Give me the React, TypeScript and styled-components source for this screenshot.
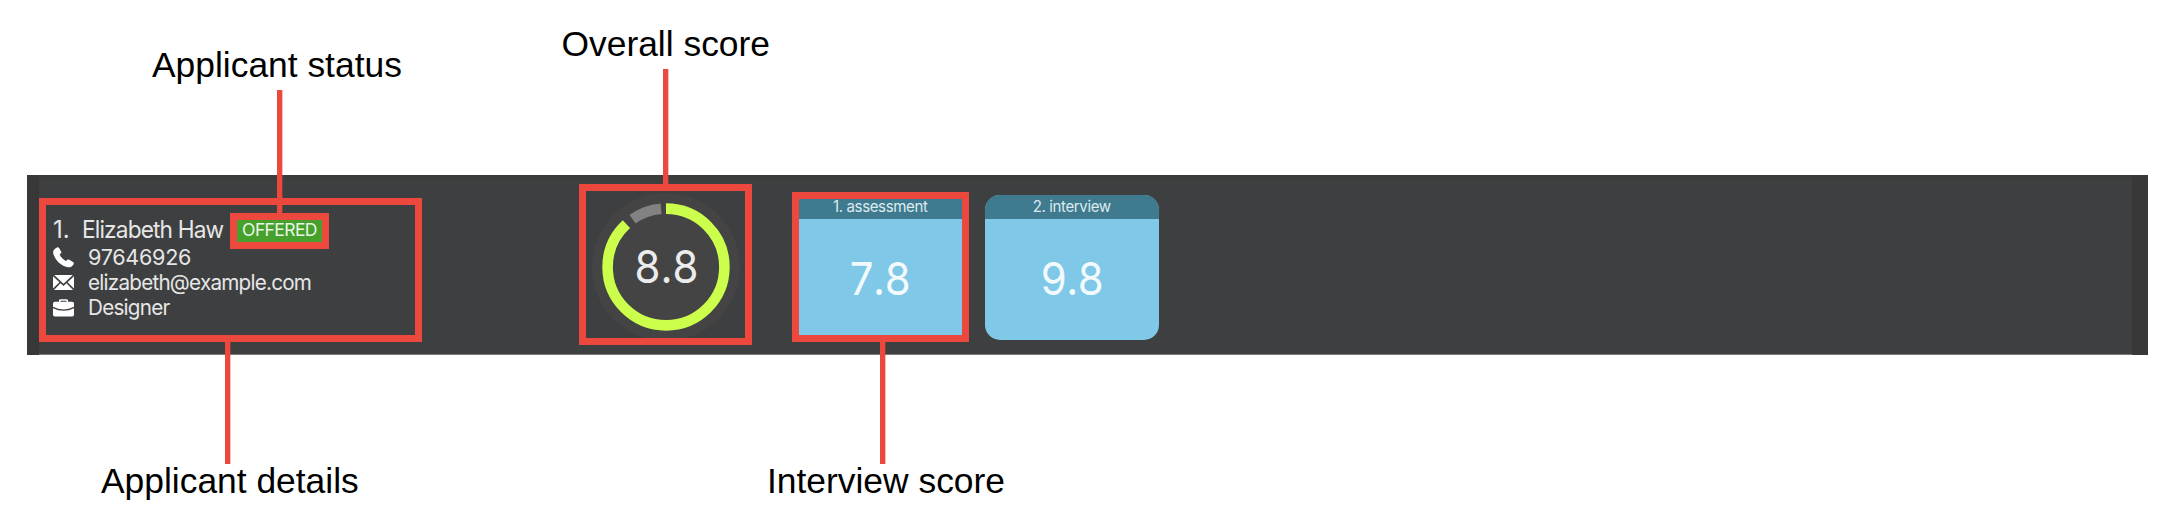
import React from "react";
import styled, { createGlobalStyle } from "styled-components";

const RED = "#ec483d";

const GlobalStyle = createGlobalStyle`
  * { box-sizing: border-box; }
  body { margin: 0; background: #fff; overflow: hidden; }
`;

const Page = styled.main`
  width: 2168px;
  height: 532px;
  display: grid;
  grid-template-rows: 175px 180px 177px;
  background: #fff;
`;

const NoteRow = styled.div<{ $offset: number }>`
  display: flex;
  align-items: flex-start;
  padding-left: ${(p) => p.$offset}px;
`;

const Note = styled.span<{ $top: number; $width: number }>`
  width: ${(p) => p.$width}px;
  margin-top: ${(p) => p.$top}px;
  font: 35.4px/40px "Liberation Sans", Arial, sans-serif;
  color: #000;
  white-space: nowrap;
`;

const Panel = styled.section`
  margin: 0 20px 0 27px;
  display: flex;
  align-items: flex-start;
  border-style: solid;
  border-color: #383838;
  border-width: 0 16px 0 12px;
  background: linear-gradient(#383b38 0, #3d3f40 5px);
  box-shadow: inset 0 -1px #77797a;
  font-family: Inter, "Liberation Sans", sans-serif;
  color: #e6e6e6;
`;

const Region = styled.div<{ $w: number; $h: number; $top: number; $left?: number }>`
  position: relative;
  flex: none;
  width: ${(p) => p.$w}px;
  height: ${(p) => p.$h}px;
  margin: ${(p) => p.$top}px 0 0 ${(p) => p.$left ?? 0}px;
`;

const Highlight = styled.i`
  position: absolute;
  inset: 0;
  border: 7px solid ${RED};
`;

const Leader = styled.i<{ $x: number; $length: number; $up?: boolean }>`
  position: absolute;
  left: ${(p) => p.$x}px;
  ${(p) => (p.$up ? "bottom: calc(100% - 3px);" : "top: calc(100% - 3px);")}
  width: 5px;
  height: ${(p) => p.$length + 3}px;
  background: ${RED};
  box-shadow: 1px 0 rgba(236, 72, 61, 0.35);
`;

const Details = styled.div`
  display: flex;
  flex-direction: column;
  padding: 15px 0 0 14px;
`;

const NameLine = styled.div`
  display: flex;
  height: 32px;
`;

const Index = styled.span`
  width: 29px;
  font-size: 24px;
  line-height: 34px;
`;

const Name = styled.span`
  width: 148px;
  font-size: 24px;
  line-height: 34px;
  letter-spacing: -0.9px;
  white-space: nowrap;
  transform: scaleX(0.945);
  transform-origin: left;
`;

const Status = styled(Region)`
  display: flex;
  justify-content: center;
  align-items: center;
  padding-bottom: 3px;
  background: #46a02c;
  font-size: 17.5px;
  letter-spacing: -0.6px;
  color: #eaf5e6;
`;

const ContactLine = styled.div`
  display: flex;
  align-items: center;
  height: 25.2px;
  gap: 14px;
  svg { flex: none; }
`;

const ContactText = styled.span<{ $spacing: number; $stretch?: number }>`
  font-size: 21.6px;
  line-height: 25px;
  letter-spacing: ${(p) => p.$spacing}px;
  white-space: nowrap;
  transform: scaleX(${(p) => p.$stretch ?? 1});
  transform-origin: left;
`;

const Gauge = styled.svg`
  display: block;
`;

const GaugeValue = styled.text`
  font-size: 45.5px;
  font-kerning: none;
  fill: #ececec;
`;

const Card = styled.article<{ $radius: number }>`
  width: 174px;
  height: 145px;
  border-radius: ${(p) => p.$radius}px;
  overflow: hidden;
  background: #7fc8e8;
`;

const CardTitle = styled.h3`
  margin: 0;
  height: 24px;
  background: #3f7a8e;
  color: #dcebf0;
  font-size: 15.7px;
  font-weight: 400;
  line-height: 24px;
  text-align: center;
  letter-spacing: -0.4px;
  span { display: inline-block; transform: scaleX(0.96); }
`;

const CardScore = styled.div`
  padding-top: 32px;
  font-size: 45.5px;
  line-height: 56px;
  text-align: center;
  letter-spacing: -0.5px;
  font-kerning: none;
  color: #f3fafd;
  transform: scaleX(0.92);
`;

const MarkedCard = styled(Region)`
  padding: 3px 0 0 1px;
`;

const PhoneIcon = () => (
  <svg width="21" height="21" viewBox="0 0 21 21" fill="#fff">
    <path d="M3.600.7C4.600 0 5.500.2 6.100 1.100L8.100 4.400C8.600 5.200 8.400 6 7.700 6.600L6.600 7.500C7.800 10.200 10.300 12.700 13 13.900L14.200 12.900C14.900 12.400 15.600 12.300 16.300 12.700L20 14.900C20.900 15.400 21.100 16.300 20.600 17.200 19.300 19.400 17.600 20.600 15.300 20.300 7.800 19.200.9 12.200.1 5.200-.1 3.300 1.900 1.700 3.600.7z" />
  </svg>
);

const MailIcon = () => (
  <svg width="21" height="15" viewBox="0 0 21 15" fill="#fff">
    <path d="M1.200 0H19.800L10.500 8.700zM0 1.200 6.400 7.200 0 13.600zM21 1.200V13.600L14.600 7.200zM7.500 8.200 10.500 11 13.500 8.200 20 15H1z" />
  </svg>
);

const BriefcaseIcon = () => (
  <svg width="21" height="18" viewBox="0 0 21 18" fill="#fff">
    <path fillRule="evenodd" d="M6 2.700V1.500Q6 .2 7.300.2h6.400Q15 .2 15 1.500v1.200h4.200Q21 2.700 21 4.500v3.200Q16 10.300 10.500 10.400 5 10.300 0 7.700V4.500Q0 2.700 1.800 2.700zM7.500 1.700v1h6v-1z" />
    <path d="M0 9.200Q5 11.700 10.500 11.800 16 11.700 21 9.200v6.500Q21 17.500 19.200 17.500H1.800Q0 17.500 0 15.700z" />
  </svg>
);

const C = 2 * Math.PI * 58.4;

const ScoreGauge = ({ value }: { value: number }) => (
  <Gauge width="173" height="160" viewBox="0 0 173 160">
    <circle cx="87" cy="83" r="74" fill="#444" />
    <g fill="none" strokeWidth="10.6" transform="rotate(-90 87 83)">
      <circle cx="87" cy="83" r="58.4" stroke="#cbff4c" strokeDasharray={`${(C * value) / 10} ${C}`} />
      <circle cx="87" cy="83" r="58.4" stroke="#828282" strokeDasharray={`${(C * 30) / 360} ${C}`} strokeDashoffset={(-C * 324.5) / 360} />
    </g>
    <GaugeValue x="87.5" y="99" textAnchor="middle" textLength="64" lengthAdjust="spacingAndGlyphs">
      {value}
    </GaugeValue>
  </Gauge>
);

export default function App() {
  return (
    <Page>
      <GlobalStyle />
      <NoteRow $offset={152}>
        <Note $top={45} $width={409.5}>Applicant status</Note>
        <Note $top={24} $width={220}>Overall score</Note>
      </NoteRow>
      <Panel>
        <Region $w={383} $h={143.5} $top={23}>
          <Highlight />
          <Details>
            <NameLine>
              <Index>1.</Index>
              <Name>Elizabeth Haw</Name>
              <Status $w={99} $h={36} $top={0}>
                OFFERED
                <Highlight />
                <Leader $x={47} $length={123} $up />
              </Status>
            </NameLine>
            <ContactLine><PhoneIcon /><ContactText $spacing={-0.3}>97646926</ContactText></ContactLine>
            <ContactLine><MailIcon /><ContactText $spacing={-0.8} $stretch={0.957}>elizabeth@example.com</ContactText></ContactLine>
            <ContactLine><BriefcaseIcon /><ContactText $spacing={-0.8} $stretch={0.957}>Designer</ContactText></ContactLine>
          </Details>
          <Leader $x={186} $length={122.5} />
        </Region>
        <Region $w={173} $h={160.5} $top={9} $left={157}>
          <ScoreGauge value={8.8} />
          <Highlight />
          <Leader $x={84} $length={115} $up />
        </Region>
        <MarkedCard $w={177} $h={150} $top={16.5} $left={40}>
          <Card $radius={6}>
            <CardTitle><span>1. assessment</span></CardTitle>
            <CardScore>7.8</CardScore>
          </Card>
          <Highlight />
          <Leader $x={88} $length={122.5} />
        </MarkedCard>
        <Region $w={174} $h={145} $top={19.5} $left={16}>
          <Card $radius={15}>
            <CardTitle><span>2. interview</span></CardTitle>
            <CardScore>9.8</CardScore>
          </Card>
        </Region>
      </Panel>
      <NoteRow $offset={101}>
        <Note $top={106} $width={666}>Applicant details</Note>
        <Note $top={106} $width={250}>Interview score</Note>
      </NoteRow>
    </Page>
  );
}
